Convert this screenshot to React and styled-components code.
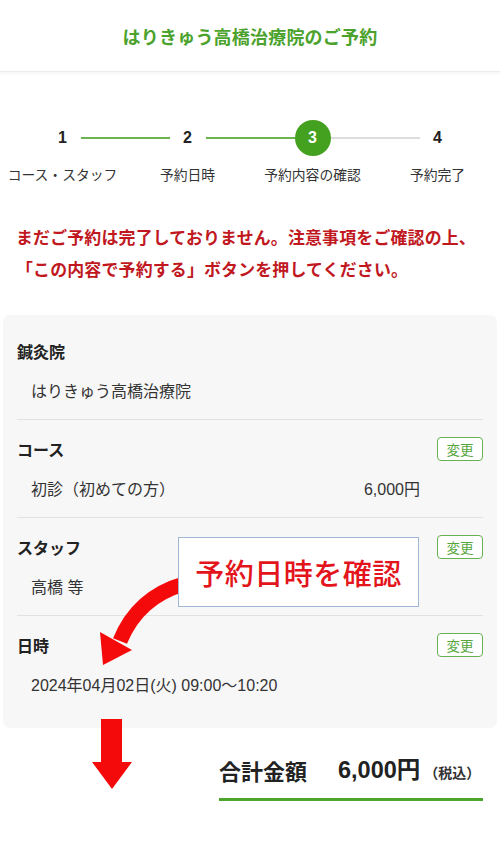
import React from "react";
import styled, { createGlobalStyle } from "styled-components";

const Global = createGlobalStyle`
  html, body { margin: 0; padding: 0; background: #fff; }
  body {
    font-family: "Liberation Sans", "Noto Sans CJK JP", sans-serif;
    color: #222;
    -webkit-font-smoothing: antialiased;
  }
  * { box-sizing: border-box; }
`;

const Page = styled.div`
  position: relative;
  width: 500px;
  min-height: 842px;
  background: #fff;
`;

const Header = styled.header`
  height: 72px;
  display: flex;
  align-items: center;
  justify-content: center;
  border-bottom: 1px solid #ececec;
  box-shadow: 0 2px 3px rgba(0, 0, 0, 0.04);
`;

const Title = styled.h1`
  margin: 0;
  font-family: "Noto Sans CJK JP", sans-serif;
  font-size: 18px;
  font-weight: 700;
  color: #4ba22c;
  letter-spacing: 0.2px;
`;

const Stepper = styled.section`
  padding-top: 48px;
`;

const Track = styled.div`
  display: flex;
  align-items: center;
  padding: 0 44.5px;
  height: 36px;
`;

const Node = styled.div`
  width: 36px;
  height: 36px;
  flex: none;
  display: flex;
  align-items: center;
  justify-content: center;
  border-radius: 50%;
  font-family: "Liberation Sans", sans-serif;
  font-weight: 700;
  font-size: 16px;
  background: ${(p) => (p.$active ? "#44a01f" : "transparent")};
  color: ${(p) => (p.$active ? "#fff" : "#222")};
`;

const Connector = styled.div`
  flex: 1;
  height: 2px;
  background: ${(p) => (p.$done ? "#6cb351" : "#dddddd")};
`;

const Labels = styled.div`
  display: grid;
  grid-template-columns: repeat(4, 1fr);
  margin-top: 8px;
`;

const StepLabel = styled.div`
  text-align: center;
  font-family: "Noto Sans CJK JP", sans-serif;
  font-size: 13.8px;
  line-height: 20px;
  color: #333;
  white-space: nowrap;
`;

const Notice = styled.p`
  margin: 37px 0 0;
  padding: 0 8px 0 16px;
  font-family: "Noto Sans CJK JP", sans-serif;
  font-size: 16.9px;
  font-weight: 700;
  line-height: 32px;
  color: #c0181e;
  letter-spacing: 0.2px;
  white-space: nowrap;
`;

const Card = styled.section`
  margin: 30px 3px 0;
  padding: 0 14px;
  background: #f7f7f7;
  border-radius: 7px;
`;

const Section = styled.div`
  padding: 17px 0 15px;
  border-bottom: 1.5px solid #e2e2e2;
  &:first-child { padding-top: 24px; }
  &:last-child { border-bottom: none; padding-bottom: 30px; }
`;

const SectionHead = styled.div`
  display: flex;
  align-items: center;
  justify-content: space-between;
  height: 24px;
`;

const Label = styled.div`
  font-family: "Noto Sans CJK JP", sans-serif;
  font-size: 16px;
  font-weight: 700;
  color: #222;
  line-height: 24px;
`;

const EditButton = styled.button`
  width: 46px;
  height: 24px;
  padding: 0;
  border: 1.5px solid #66b150;
  border-radius: 4px;
  background: #fff;
  color: #56a63c;
  font-family: "Noto Sans CJK JP", sans-serif;
  font-size: 13.5px;
  line-height: 20px;
  cursor: pointer;
`;

const Value = styled.div`
  display: flex;
  justify-content: space-between;
  height: 24px;
  margin-top: 17px;
  padding: 0 63px 0 14px;
  font-family: "Liberation Sans", "Noto Sans CJK JP", sans-serif;
  font-size: 16px;
  line-height: 24px;
  color: #333;
`;

const TotalRow = styled.div`
  display: flex;
  align-items: center;
  width: 264px;
  height: 30px;
  box-sizing: content-box;
  margin: 27px 17px 0 auto;
  padding-bottom: 13px;
  border-bottom: 3px solid #4ea52e;
`;

const TotalLabel = styled.span`
  font-family: "Noto Sans CJK JP", sans-serif;
  font-size: 22px;
  font-weight: 700;
  line-height: 30px;
  color: #222;
  margin-right: 31px;
`;

const TotalAmount = styled.span`
  font-family: "Liberation Sans", "Noto Sans CJK JP", sans-serif;
  font-size: 23.5px;
  font-weight: 700;
  line-height: 30px;
  color: #222;
`;

const TaxNote = styled.span`
  font-family: "Noto Sans CJK JP", sans-serif;
  font-size: 14px;
  font-weight: 700;
  line-height: 30px;
  color: #333;
  margin-left: 4px;
  padding-top: 3px;
`;

const Overlay = styled.div`
  position: absolute;
  inset: 0;
  pointer-events: none;
`;

const Callout = styled.div`
  position: absolute;
  left: 178px;
  top: 537px;
  width: 241px;
  height: 70px;
  display: flex;
  align-items: center;
  justify-content: center;
  background: #fff;
  border: 1px solid #a3b5d6;
  font-family: "Noto Sans CJK JP", sans-serif;
  font-size: 29px;
  font-weight: 500;
  color: #e3141b;
  letter-spacing: 0.5px;
`;

const ArrowLayer = styled.svg`
  position: absolute;
  left: 0;
  top: 0;
`;

const steps = [
  { n: 1, label: "コース・スタッフ" },
  { n: 2, label: "予約日時" },
  { n: 3, label: "予約内容の確認" },
  { n: 4, label: "予約完了" },
];

const current = 3;

export default function App() {
  return (
    <Page>
      <Global />
      <Header>
        <Title>はりきゅう高橋治療院のご予約</Title>
      </Header>

      <Stepper>
        <Track>
          {steps.map((s, i) => (
            <React.Fragment key={s.n}>
              <Node $active={s.n === current}>{s.n}</Node>
              {i < steps.length - 1 && <Connector $done={s.n < current} />}
            </React.Fragment>
          ))}
        </Track>
        <Labels>
          {steps.map((s) => (
            <StepLabel key={s.n}>{s.label}</StepLabel>
          ))}
        </Labels>
      </Stepper>

      <Notice>
        まだご予約は完了しておりません。注意事項をご確認の上、
        <br />
        「この内容で予約する」ボタンを押してください。
      </Notice>

      <Card>
        <Section>
          <SectionHead>
            <Label>鍼灸院</Label>
          </SectionHead>
          <Value>
            <span>はりきゅう高橋治療院</span>
          </Value>
        </Section>
        <Section>
          <SectionHead>
            <Label>コース</Label>
            <EditButton>変更</EditButton>
          </SectionHead>
          <Value>
            <span>初診（初めての方）</span>
            <span>6,000円</span>
          </Value>
        </Section>
        <Section>
          <SectionHead>
            <Label>スタッフ</Label>
            <EditButton>変更</EditButton>
          </SectionHead>
          <Value>
            <span>高橋 等</span>
          </Value>
        </Section>
        <Section>
          <SectionHead>
            <Label>日時</Label>
            <EditButton>変更</EditButton>
          </SectionHead>
          <Value>
            <span>2024年04月02日(火) 09:00〜10:20</span>
          </Value>
        </Section>
      </Card>

      <TotalRow>
        <TotalLabel>合計金額</TotalLabel>
        <TotalAmount>6,000円</TotalAmount>
        <TaxNote>（税込）</TaxNote>
      </TotalRow>

      <Overlay>
        <ArrowLayer width="500" height="842" viewBox="0 0 500 842">
          <path
            d="M 184 584 Q 138 597 120 641"
            fill="none"
            stroke="#f40a0a"
            strokeWidth="15"
          />
          <polygon points="100,632 103,665 132,650" fill="#f40a0a" />
          <rect x="101" y="719" width="21" height="44" fill="#f40a0a" />
          <polygon points="92,762 132,762 112,789" fill="#f40a0a" />
        </ArrowLayer>
        <Callout>予約日時を確認</Callout>
      </Overlay>
    </Page>
  );
}
